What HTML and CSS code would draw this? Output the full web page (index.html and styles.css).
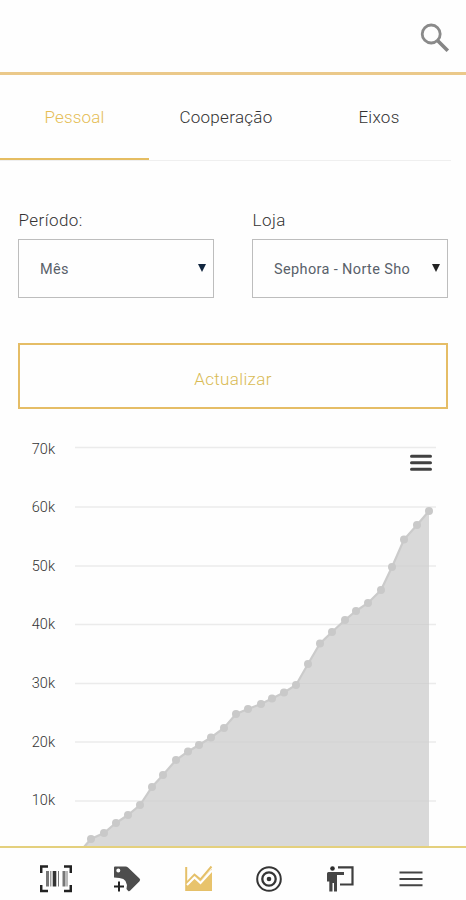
FILE: index.html
```html
<!DOCTYPE html>
<html lang="pt">
<head>
<meta charset="utf-8">
<meta name="viewport" content="width=device-width, initial-scale=1">
<title>Pessoal</title>
<link rel="stylesheet" href="styles.css">
</head>
<body>
<div class="app">
  <header class="topbar">
    <svg class="search" viewBox="0 0 30 30"><circle cx="11.2" cy="11" r="9" fill="none" stroke="#8a8a8a" stroke-width="2.800"/><path d="M17.8 17.8 27.8 27.8" stroke="#858585" stroke-width="3.600"/></svg>
  </header>
  <nav class="tabs">
    <a class="tab active">Pessoal</a>
    <a class="tab">Cooperação</a>
    <a class="tab">Eixos</a>
  </nav>
  <main class="content">
    <div class="filters">
      <div class="field">
        <label>Período:</label>
        <div class="select"><span class="value">Mês</span><svg class="arrow" viewBox="0 0 8 8"><path d="M0 0H8L4 8Z" fill="#12263f"/></svg></div>
      </div>
      <div class="field">
        <label>Loja</label>
        <div class="select"><span class="value">Sephora - Norte Sho</span><svg class="arrow" viewBox="0 0 8 8"><path d="M0 0H8L4 8Z" fill="#222"/></svg></div>
      </div>
    </div>
    <button class="refresh">Actualizar</button>
  </main>
  <svg class="chart" viewBox="0 430 466 416">
    <path d="M75 447.5H436M75 507H436M75 566H436M75 624.5H436M75 683.5H436M75 742H436M75 801H436" stroke="#ebebeb" stroke-width="1.6"/>
    <path d="M84 847 91 839 104 833 116 823 128 815 140 805 152 787 163 775 176 760 188 751.5 199 745 211 737.5 224 728 236 714 248 709 261 704 272 698.5 284 692.5 296 685 308 664 320 643.5 332 632 345 620 356 611 368 603 381 590 392 567 404 539.5 417 525 429 511V850H84Z" fill="#d9d9d9"/>
    <path d="M393 566H429M341 624.5H429M297 683.5H429M205 742H429M143 801H429" class="overgrid"/>
    <path class="line" d="M84 847 91 839 104 833 116 823 128 815 140 805 152 787 163 775 176 760 188 751.5 199 745 211 737.5 224 728 236 714 248 709 261 704 272 698.5 284 692.5 296 685 308 664 320 643.5 332 632 345 620 356 611 368 603 381 590 392 567 404 539.5 417 525 429 511"/>
    <path class="dots" d="M91 839h0M104 833h0M116 823h0M128 815h0M140 805h0M152 787h0M163 775h0M176 760h0M188 751.5h0M199 745h0M211 737.5h0M224 728h0M236 714h0M248 709h0M261 704h0M272 698.5h0M284 692.5h0M296 685h0M308 664h0M320 643.5h0M332 632h0M345 620h0M356 611h0M368 603h0M381 590h0M392 567h0M404 539.5h0M417 525h0M429 511h0"/>
    <g class="axis">
      <text x="55" y="454">70k</text><text x="55" y="512">60k</text><text x="55" y="571">50k</text><text x="55" y="629">40k</text><text x="55" y="688">30k</text><text x="55" y="747">20k</text><text x="55" y="805">10k</text>
    </g>
    <path d="M411.5 456.3H430.5M411.5 462.8H430.5M411.5 469.3H430.5" stroke="#414141" stroke-width="3" stroke-linecap="round"/>
  </svg>
  <nav class="bottom">
    <svg class="icon" viewBox="0 0 32 28"><path d="M1.200 8V1.500H8M24 1.500H30.800V8M1.200 20V26H8M24 26H30.800V20" fill="none" stroke="#222" stroke-width="2.500"/><path d="M7.500 6V21.500M24 6V21.500" stroke="#777" stroke-width="3"/><path d="M14.500 6V21.500" stroke="#333" stroke-width="3.600"/><path d="M10.800 6V21.500M18.500 6V21.500M27 6V21.500" stroke="#777" stroke-width="1"/></svg>
    <svg class="icon" viewBox="0 0 32 28"><path d="M4 1.500H14.500Q16 1.500 17 2.500L28.500 13.500Q29.800 14.800 28.500 16.200L19 25.800Q18 26.700 17 25.700L15.500 24Q17.500 14 8.500 13L3 12.500V2.500Q3 1.500 4 1.500ZM7.300 3.600A2 2 0 1 0 7.300 7.600 2 2 0 1 0 7.300 3.600Z" fill="#4d4d4d" fill-rule="evenodd"/><path d="M8 16.500V26.500M3 21.500H13" stroke="#222" stroke-width="2"/></svg>
    <svg class="icon" viewBox="0 0 32 28"><path d="M4.200 2V25H30" fill="none" stroke="#e5c069" stroke-width="2"/><path d="M5 24V18L12.500 10.500 18.500 16 30 4V25H5Z" fill="#e8c36c"/><path d="M5 17.500 12.500 9.500 18.500 14.500 29.500 1.500" fill="none" stroke="#e5c069" stroke-width="2"/><path d="M5 20 12.500 12.500 18.500 18 30 5.500" fill="none" stroke="#fff" stroke-width="2"/></svg>
    <svg class="icon" viewBox="0 0 32 28"><g fill="none" stroke="#353535"><circle cx="16" cy="14" r="11.800" stroke-width="2"/><circle cx="16" cy="14" r="6.700" stroke-width="2.300"/></g><circle cx="16" cy="14" r="2.300" fill="#333"/></svg>
    <svg class="icon" viewBox="0 0 32 28"><circle cx="8.500" cy="3.500" r="2.300" fill="#2d2d2d"/><path d="M4.500 7H20V10H13V26.500H10V18H8.500V26.500H5.300V16.500H3V8.500Q3 7 4.500 7Z" fill="#454545"/><path d="M14 2.300H28.500V19.500H16" fill="none" stroke="#3e3e3e" stroke-width="2.200"/></svg>
    <svg class="icon" viewBox="0 0 32 28"><path d="M4.500 7.500H27.500M4.500 14H27.500M4.500 20.300H27.500" stroke="#444" stroke-width="2"/></svg>
  </nav>
</div>
</body>
</html>
```
FILE: styles.css
```css
* { box-sizing: border-box; }
body { margin: 0; background: #fefefe; font-family: Roboto, "Liberation Sans", sans-serif; color: #333; }
.app { display: flex; flex-direction: column; width: 466px; height: 900px; overflow: hidden; }
.topbar { height: 75px; flex: none; border-bottom: 3px solid #ebc98a; display: flex; justify-content: flex-end; padding: 23px 16px 0 0; }
.search { width: 30px; height: 30px; }
.tabs { display: flex; flex: none; height: 86px; background: linear-gradient(#efefef, #efefef) left bottom / 451px 1px no-repeat; }
.tab { flex: none; width: 152px; height: 85px; padding-top: 31px; text-align: center; font-size: 17px; line-height: 22px; letter-spacing: 0.3px; font-weight: 300; color: #333; }
.tab.active { width: 149px; letter-spacing: 0.2px; color: #e5bd55; border-bottom: 2px solid #e5bd62; }
.tab:nth-child(2) { width: 154px; }
.content { flex: none; height: 269px; padding: 48px 18px 0; }
.filters { display: grid; grid-template-columns: 196px 196px; gap: 38px; }
.field { display: flex; flex-direction: column; }
.field label { height: 30px; padding-left: 0.5px; line-height: 22px; font-size: 17px; letter-spacing: 0.45px; font-weight: 300; color: #333; }
.select { height: 59px; border: 1.5px solid #bdbdbd; display: flex; align-items: center; justify-content: space-between; padding: 2px 7px 0 21px; font-size: 14.5px; letter-spacing: 0.37px; font-weight: 400; color: #59616a; }
.value { white-space: nowrap; }
.arrow { width: 8px; height: 8px; margin-top: -3px; }
.refresh { display: block; width: 430px; height: 66px; margin-top: 45px; padding: 6px 0 0; background: transparent; border: 2px solid #e5bd66; color: #d9bb55; font: 300 17px Roboto, sans-serif; letter-spacing: 0.35px; }
.chart { display: block; flex: none; width: 466px; height: 416px; }
.overgrid { stroke: #d3d3d3; stroke-width: 1; }
.line { fill: none; stroke: #cbcbcb; stroke-width: 2.2; }
.dots { fill: none; stroke: #c9c9c9; stroke-width: 8; stroke-linecap: round; }
.axis { font-size: 14.5px; font-weight: 300; fill: #333; text-anchor: end; }
.bottom { flex: none; height: 54px; border-top: 2px solid #e4d07d; background: #fefefe; display: grid; grid-template-columns: repeat(6, 32px); column-gap: 39px; padding: 17px 0 0 40px; }
.icon { width: 32px; height: 28px; }
```
